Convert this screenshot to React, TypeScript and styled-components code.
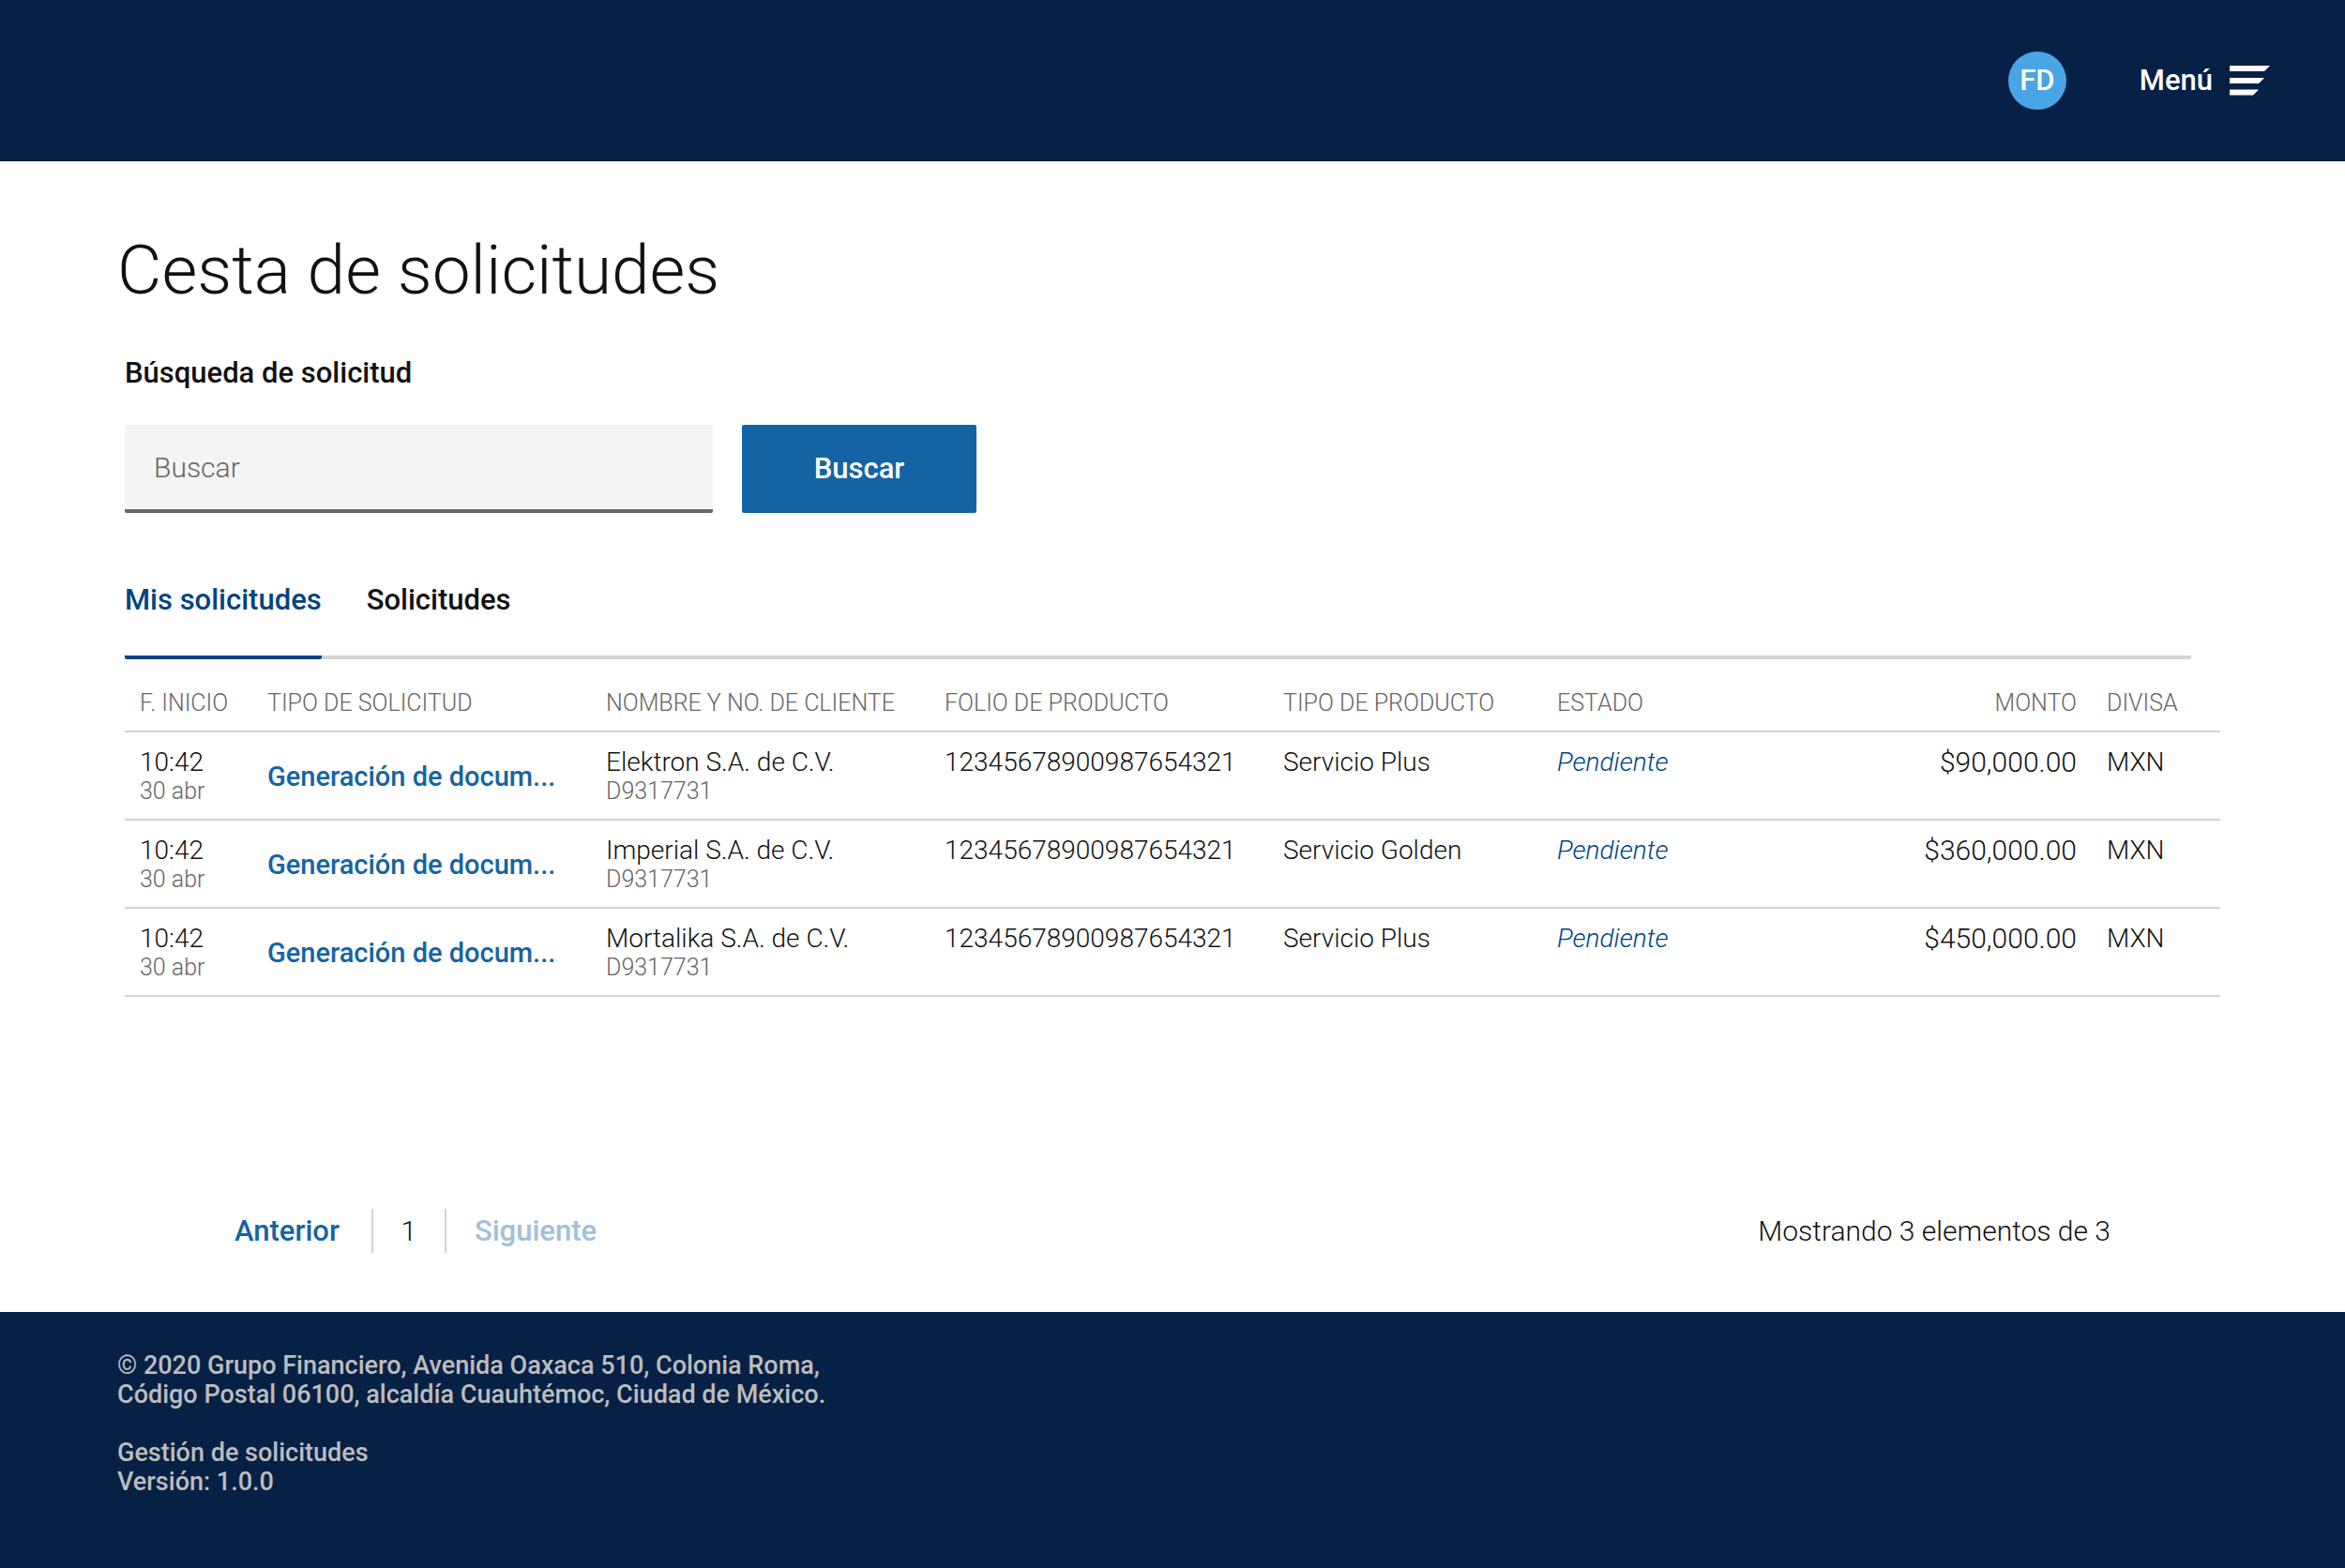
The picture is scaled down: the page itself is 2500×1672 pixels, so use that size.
import React, { useState } from "react";
import styled, { createGlobalStyle } from "styled-components";

const color = {
  navy: "#072146",
  blue: "#1464a5",
  darkBlue: "#004481",
  sky: "#49a5e6",
  disabled: "#a1c1db",
  ink: "#121212",
  muted: "#666666",
  line: "#d3d3d3",
  field: "#f4f4f4",
  footerText: "#bdbdbd",
};

const GlobalStyle = createGlobalStyle`
  *, *::before, *::after { box-sizing: border-box; }
  body {
    margin: 0;
    background: #ffffff;
    color: ${color.ink};
    font-family: Roboto, "Open Sans", sans-serif;
    font-size: 30px;
    line-height: 36px;
    font-weight: 300;
  }
  button, input { font: inherit; }
`;

const Page = styled.div`
  display: flex;
  flex-direction: column;
  min-height: 100vh;
`;

const Header = styled.header`
  display: flex;
  align-items: center;
  justify-content: flex-end;
  gap: 78px;
  height: 172px;
  padding: 0 80px;
  background: ${color.navy};
`;

const Avatar = styled.div`
  display: grid;
  place-items: center;
  width: 62px;
  height: 62px;
  border-radius: 50%;
  background: ${color.sky};
  color: #ffffff;
  font-size: 31px;
  font-weight: 500;
`;

const MenuButton = styled.button`
  display: flex;
  align-items: center;
  gap: 18px;
  padding: 0;
  border: 0;
  background: none;
  color: #ffffff;
  font-size: 31px;
  font-weight: 500;
  cursor: pointer;
`;

const Main = styled.main`
  padding: 74px 125px 0;
`;

const Title = styled.h1`
  margin: 0 0 50px;
  font-size: 73px;
  line-height: 84px;
  font-weight: 300;
`;

const Content = styled.div`
  padding: 0 8px;
`;

const SearchForm = styled.form`
  display: flex;
  flex-wrap: wrap;
  column-gap: 31px;
  row-gap: 37px;
`;

const SearchLabel = styled.label`
  flex: 0 0 100%;
  font-size: 31px;
  font-weight: 500;
`;

const SearchInput = styled.input`
  width: 627px;
  height: 94px;
  padding: 0 31px;
  border: 0;
  border-bottom: 4px solid ${color.muted};
  border-radius: 2px;
  background: ${color.field};
  color: ${color.ink};
  outline: none;

  &::placeholder {
    color: ${color.muted};
    opacity: 1;
  }
`;

const SearchButton = styled.button`
  width: 250px;
  height: 94px;
  border: 0;
  border-radius: 2px;
  background: ${color.blue};
  color: #ffffff;
  font-size: 31px;
  font-weight: 500;
  cursor: pointer;
`;

const TabList = styled.div`
  display: flex;
  gap: 48px;
  margin: 75px 31px 0 0;
  border-radius: 2px;
  box-shadow: inset 0 -4px 0 ${color.line};
`;

const Tab = styled.button<{ $active: boolean }>`
  padding: 0 0 41px;
  border: 0;
  border-bottom: 4px solid ${(p) => (p.$active ? color.darkBlue : "transparent")};
  border-radius: 2px;
  background: none;
  color: ${(p) => (p.$active ? color.darkBlue : color.ink)};
  font-size: 31px;
  font-weight: 500;
  cursor: pointer;
`;

const Table = styled.table`
  width: 100%;
  table-layout: fixed;
  border-spacing: 0;
`;

const Col = styled.col<{ $width?: number }>`
  width: ${(p) => (p.$width ? `${p.$width}px` : "auto")};
`;

const HeadCell = styled.th<{ $right?: boolean }>`
  padding: 32px 16px 14px;
  border-bottom: 2px solid ${color.line};
  color: ${color.muted};
  font-size: 25px;
  line-height: 30px;
  font-weight: 300;
  text-align: ${(p) => (p.$right ? "right" : "left")};
  white-space: nowrap;
`;

const Cell = styled.td<{ $right?: boolean; $middle?: boolean }>`
  padding: 16px 16px 14px;
  border-bottom: 2px solid ${color.line};
  font-size: ${(p) => (p.$right ? 30 : 28)}px;
  line-height: 32px;
  text-align: ${(p) => (p.$right ? "right" : "left")};
  vertical-align: ${(p) => (p.$middle ? "middle" : "top")};
  white-space: nowrap;
`;

const SubText = styled.div`
  color: ${color.muted};
  font-size: 25px;
  line-height: 30px;
`;

const RequestLink = styled.a`
  display: block;
  color: ${color.blue};
  font-size: 29px;
  font-weight: 500;
  text-decoration: none;
`;

const Status = styled.em`
  color: ${color.darkBlue};
`;

const PaginationBar = styled.div`
  display: flex;
  align-items: center;
  justify-content: space-between;
  padding: 226px 117px 63px;
`;

const Pager = styled.nav`
  display: flex;
  align-items: center;
`;

const PagerButton = styled.button`
  padding: 0;
  border: 0;
  background: none;
  color: ${color.blue};
  font-size: 31px;
  font-weight: 500;
  cursor: pointer;

  &:disabled {
    color: ${color.disabled};
    cursor: default;
  }
`;

const PageNumber = styled.span`
  width: 80px;
  height: 47px;
  margin: 0 30px 0 34px;
  border: solid ${color.line};
  border-width: 0 2px;
  line-height: 47px;
  text-align: center;
`;

const Footer = styled.footer`
  flex: 1;
  padding: 42px 125px;
  background: ${color.navy};
  color: ${color.footerText};
  font-size: 27px;
  line-height: 31px;
  font-weight: 500;
`;

const FooterText = styled.p`
  margin: 0 0 31px;
`;

const requests = [
  { client: "Elektron S.A. de C.V.", product: "Servicio Plus", amount: "$90,000.00" },
  { client: "Imperial S.A. de C.V.", product: "Servicio Golden", amount: "$360,000.00" },
  { client: "Mortalika S.A. de C.V.", product: "Servicio Plus", amount: "$450,000.00" },
];

const tabs = ["Mis solicitudes", "Solicitudes"];

function MenuIcon() {
  return (
    <svg width="43" height="32" viewBox="0 0 43 32" fill="#ffffff" aria-hidden="true">
      <path d="M0 0h43l-6 6H0zM0 13h37l-6 6H0zM0 25.500h31l-6 6H0z" />
    </svg>
  );
}

export default function App() {
  const [active, setActive] = useState(0);
  return (
    <Page>
      <GlobalStyle />
      <Header>
        <Avatar>FD</Avatar>
        <MenuButton type="button">
          Menú
          <MenuIcon />
        </MenuButton>
      </Header>
      <Main>
        <Title>Cesta de solicitudes</Title>
        <Content>
          <SearchForm onSubmit={(e) => e.preventDefault()}>
            <SearchLabel htmlFor="search">Búsqueda de solicitud</SearchLabel>
            <SearchInput id="search" type="text" placeholder="Buscar" />
            <SearchButton type="submit">Buscar</SearchButton>
          </SearchForm>
          <TabList role="tablist">
            {tabs.map((name, i) => (
              <Tab
                key={name}
                type="button"
                role="tab"
                aria-selected={i === active}
                $active={i === active}
                onClick={() => setActive(i)}
              >
                {name}
              </Tab>
            ))}
          </TabList>
          <Table>
            <colgroup>
              <Col $width={136} />
              <Col $width={361} />
              <Col $width={361} />
              <Col $width={361} />
              <Col $width={292} />
              <Col $width={292} />
              <Col />
              <Col $width={137} />
            </colgroup>
            <thead>
              <tr>
                <HeadCell scope="col">F. INICIO</HeadCell>
                <HeadCell scope="col">TIPO DE SOLICITUD</HeadCell>
                <HeadCell scope="col">NOMBRE Y NO. DE CLIENTE</HeadCell>
                <HeadCell scope="col">FOLIO DE PRODUCTO</HeadCell>
                <HeadCell scope="col">TIPO DE PRODUCTO</HeadCell>
                <HeadCell scope="col">ESTADO</HeadCell>
                <HeadCell scope="col" $right>MONTO</HeadCell>
                <HeadCell scope="col">DIVISA</HeadCell>
              </tr>
            </thead>
            <tbody>
              {requests.map((r) => (
                <tr key={r.client}>
                  <Cell>
                    10:42
                    <SubText>30 abr</SubText>
                  </Cell>
                  <Cell $middle>
                    <RequestLink href="#">Generación de docum...</RequestLink>
                  </Cell>
                  <Cell>
                    {r.client}
                    <SubText>D9317731</SubText>
                  </Cell>
                  <Cell>12345678900987654321</Cell>
                  <Cell>{r.product}</Cell>
                  <Cell><Status>Pendiente</Status></Cell>
                  <Cell $right>{r.amount}</Cell>
                  <Cell>MXN</Cell>
                </tr>
              ))}
            </tbody>
          </Table>
          <PaginationBar>
            <Pager aria-label="Paginación">
              <PagerButton type="button">Anterior</PagerButton>
              <PageNumber>1</PageNumber>
              <PagerButton type="button" disabled>Siguiente</PagerButton>
            </Pager>
            <span>Mostrando 3 elementos de 3</span>
          </PaginationBar>
        </Content>
      </Main>
      <Footer>
        <FooterText>
          © 2020 Grupo Financiero, Avenida Oaxaca 510, Colonia Roma,
          <br />
          Código Postal 06100, alcaldía Cuauhtémoc, Ciudad de México.
        </FooterText>
        <FooterText>
          Gestión de solicitudes
          <br />
          Versión: 1.0.0
        </FooterText>
      </Footer>
    </Page>
  );
}
